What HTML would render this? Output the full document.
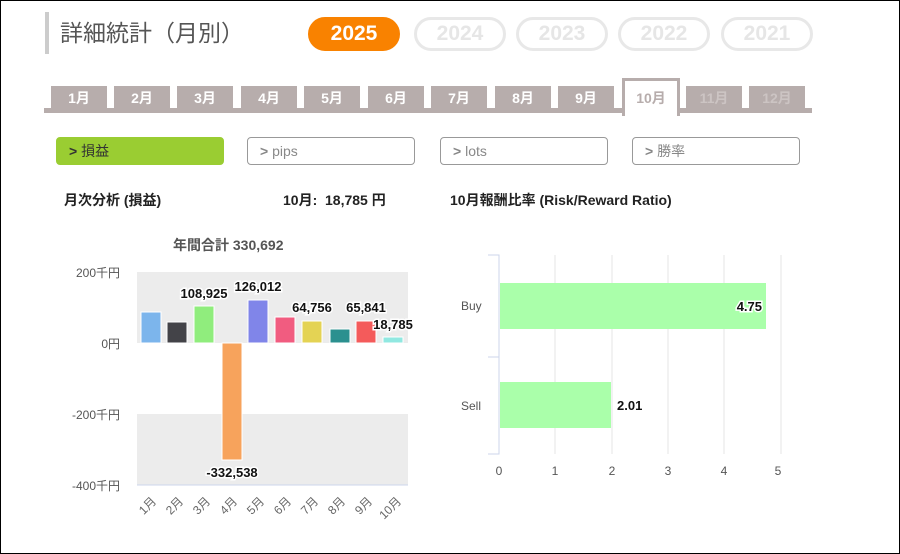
<!DOCTYPE html><html><head><meta charset="utf-8"><style>
body{margin:0;width:900px;height:554px;overflow:hidden;background:#fff;font-family:"Liberation Sans","Noto Sans CJK JP",sans-serif;position:relative}
.frame{position:absolute;left:0;top:0;width:898px;height:552px;border:1px solid #000}
.a{position:absolute}
.title{left:45px;top:12px;height:42px;border-left:4px solid #ccc;padding-left:11px;font-size:23px;color:#555;line-height:42px}
.pill{top:17px;width:86px;height:28px;border:3px solid #e8e8e8;border-radius:17px;color:#e6e6e6;font-weight:bold;font-size:21px;text-align:center;line-height:28px}
.tab{top:86px;width:56px;height:24px;background:#b7adac;color:#fff;font-weight:bold;font-size:14px;text-align:center;line-height:25px}
.btn{top:137px;width:166px;height:26px;border:1px solid #999;border-radius:4px;font-size:14px;color:#888;line-height:26px}
.btn span{margin-left:12px}
.h{font-size:14px;font-weight:bold;color:#222}
</style></head><body>
<div class="frame"></div>
<div class="a title">詳細統計（月別）</div>
<div class="a pill" style="left:308px;background:#f98200;border-color:#f98200;color:#fff">2025</div>
<div class="a pill" style="left:414px">2024</div>
<div class="a pill" style="left:516px">2023</div>
<div class="a pill" style="left:618px">2022</div>
<div class="a pill" style="left:721px">2021</div>
<div class="a" style="left:44px;top:108px;width:768px;height:5px;background:#b7adac"></div>
<div class="a tab" style="left:51px">1月</div>
<div class="a tab" style="left:114px">2月</div>
<div class="a tab" style="left:177px">3月</div>
<div class="a tab" style="left:241px">4月</div>
<div class="a tab" style="left:304px">5月</div>
<div class="a tab" style="left:368px">6月</div>
<div class="a tab" style="left:431px">7月</div>
<div class="a tab" style="left:495px">8月</div>
<div class="a tab" style="left:558px">9月</div>
<div class="a" style="left:622px;top:78px;width:52px;height:35px;border:3px solid #b7adac;border-bottom:none;background:#fff;color:#b7adac;font-weight:bold;font-size:14px;text-align:center;line-height:34px">10月</div>
<div class="a tab" style="left:686px;color:#ccc4c3">11月</div>
<div class="a tab" style="left:749px;color:#ccc4c3">12月</div>
<div class="a btn" style="left:56px;background:#9acd32;border-color:#9acd32;color:#333"><span><b>&gt;</b> 損益</span></div>
<div class="a btn" style="left:247px"><span><b>&gt;</b> pips</span></div>
<div class="a btn" style="left:440px"><span><b>&gt;</b> lots</span></div>
<div class="a btn" style="left:632px"><span><b>&gt;</b> 勝率</span></div>
<div class="a h" style="left:64px;top:190px">月次分析 (損益)</div>
<div class="a h" style="left:283px;top:190px">10月:&nbsp;&nbsp;18,785 円</div>
<div class="a h" style="left:450px;top:190px">10月報酬比率 (Risk/Reward Ratio)</div>
<div class="a" style="left:173px;top:235px;font-size:14px;font-weight:bold;color:#555">年間合計 330,692</div>
<svg class="a" style="left:0;top:0" width="900" height="554">
<rect x="137" y="272" width="271" height="71" fill="#ececec"/>
<rect x="137" y="414" width="271" height="71" fill="#ececec"/>
<line x1="137" y1="485" x2="408" y2="485" stroke="#ccd6eb"/>
<g font-size="12" fill="#555" text-anchor="end" font-family="Liberation Sans,Noto Sans CJK JP,sans-serif">
<text x="120" y="277">200千円</text><text x="120" y="348">0円</text><text x="120" y="419">-200千円</text><text x="120" y="490">-400千円</text></g>
<g stroke="#fff" stroke-width="1">
<rect x="141" y="312" width="20" height="31" fill="#7cb5ec"/>
<rect x="167" y="322" width="20" height="21" fill="#434348"/>
<rect x="194" y="306" width="20" height="37" fill="#90ed7d"/>
<rect x="222" y="343" width="20" height="117" fill="#f7a35c"/>
<rect x="248" y="300" width="20" height="43" fill="#8085e9"/>
<rect x="275" y="317" width="20" height="26" fill="#f15c80"/>
<rect x="302" y="321" width="20" height="22" fill="#e4d354"/>
<rect x="330" y="329" width="20" height="14" fill="#2b908f"/>
<rect x="356" y="321" width="20" height="22" fill="#f45b5b"/>
<rect x="383" y="337" width="20" height="6" fill="#91e8e1"/></g>
<g font-size="13" font-weight="bold" fill="#111" text-anchor="middle" font-family="Liberation Sans,sans-serif" stroke="#fff" stroke-width="3" paint-order="stroke">
<text x="204" y="298">108,925</text><text x="258" y="291">126,012</text><text x="312" y="312">64,756</text><text x="366" y="312">65,841</text><text x="393" y="329">18,785</text><text x="232" y="477">-332,538</text></g>
<g font-size="12" fill="#666" font-family="Liberation Sans,Noto Sans CJK JP,sans-serif" text-anchor="end">
<text transform="translate(157,502) rotate(-45)">1月</text><text transform="translate(184,502) rotate(-45)">2月</text><text transform="translate(211,502) rotate(-45)">3月</text><text transform="translate(238,502) rotate(-45)">4月</text><text transform="translate(265,502) rotate(-45)">5月</text><text transform="translate(292,502) rotate(-45)">6月</text><text transform="translate(319,502) rotate(-45)">7月</text><text transform="translate(346,502) rotate(-45)">8月</text><text transform="translate(373,502) rotate(-45)">9月</text><text transform="translate(402,502) rotate(-45)">10月</text></g>
<g stroke="#e6e6e6"><line x1="555" y1="255" x2="555" y2="454"/><line x1="612" y1="255" x2="612" y2="454"/><line x1="668" y1="255" x2="668" y2="454"/><line x1="724" y1="255" x2="724" y2="454"/><line x1="781" y1="255" x2="781" y2="454"/></g>
<path d="M488 255H499V454H488M488 357H499" fill="none" stroke="#ccd6eb"/>
<rect x="500" y="283" width="266" height="46" fill="#aaffaa"/>
<rect x="500" y="382" width="111" height="46" fill="#aaffaa"/>
<g font-size="13" font-weight="bold" fill="#111" font-family="Liberation Sans,sans-serif" stroke="#fff" stroke-width="3" paint-order="stroke">
<text x="762" y="311" text-anchor="end">4.75</text><text x="617" y="410">2.01</text></g>
<g font-size="12" fill="#555" font-family="Liberation Sans,sans-serif">
<text x="461" y="310">Buy</text><text x="461" y="410">Sell</text>
<g text-anchor="middle"><text x="499" y="475">0</text><text x="555" y="475">1</text><text x="612" y="475">2</text><text x="668" y="475">3</text><text x="724" y="475">4</text><text x="778" y="475">5</text></g></g>
</svg>
</body></html>
